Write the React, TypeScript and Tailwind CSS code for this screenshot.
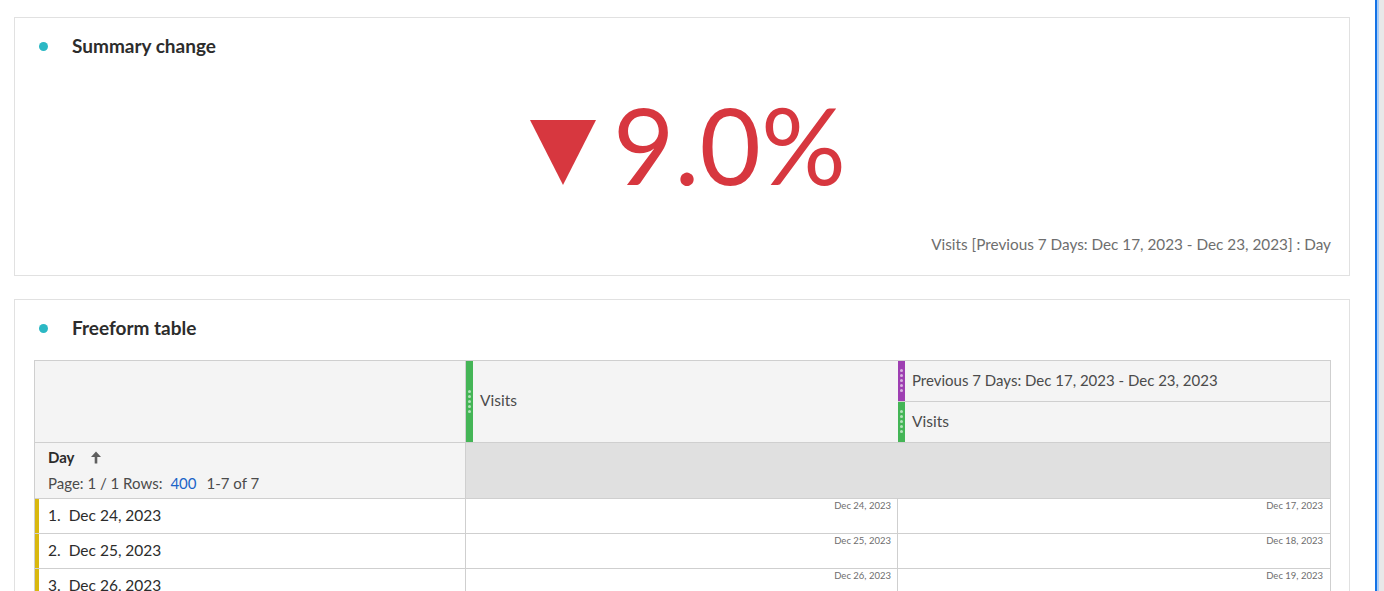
import React from "react";

const font = { fontFamily: "Lato, 'Noto Sans', sans-serif" };

function Grip({ color }: { color: string }) {
  return (
    <div className={`flex w-[7px] shrink-0 flex-col items-center justify-center gap-[2px] self-stretch ${color}`}>
      {[0, 1, 2, 3, 4].map((i) => (
        <span key={i} className="h-[3px] w-[3px] rounded-full bg-white/60" />
      ))}
    </div>
  );
}

function PanelTitle({ label }: { label: string }) {
  return (
    <div className="flex items-center pl-[24px] pt-[14px]">
      <span className="h-[9px] w-[9px] rounded-full bg-[#2bb8c4]" />
      <span className="ml-[24px] text-[19px] font-bold text-[#2c2c2c]">{label}</span>
    </div>
  );
}

const rows = [
  { n: 1, day: "Dec 24, 2023", a: "Dec 24, 2023", b: "Dec 17, 2023" },
  { n: 2, day: "Dec 25, 2023", a: "Dec 25, 2023", b: "Dec 18, 2023" },
  { n: 3, day: "Dec 26, 2023", a: "Dec 26, 2023", b: "Dec 19, 2023" },
];

export default function App() {
  return (
    <div className="flex h-[591px] w-[1384px] overflow-hidden bg-white" style={font}>
      <div className="flex flex-1 flex-col gap-[23px] pl-[14px] pr-[25px] pt-[17px]">
        {/* Summary change */}
        <section className="flex h-[259px] shrink-0 flex-col border border-[#e1e1e1] bg-white">
          <PanelTitle label="Summary change" />
          <div className="flex flex-1 items-center justify-center pl-[12px] pt-[8px]">
            <svg width="66" height="66" viewBox="0 0 66 66" className="mt-[4px]">
              <polygon points="0,0 66,0 33,65" fill="#d7373f" />
            </svg>
            <span className="mb-[14px] ml-[17px] text-[106px] leading-none text-[#d7373f]">9.0%</span>
          </div>
          <div className="pb-[19px] pr-[18px] text-right text-[15.3px] text-[#6e6e6e]">
            Visits [Previous 7 Days: Dec 17, 2023 - Dec 23, 2023] : Day
          </div>
        </section>

        {/* Freeform table */}
        <section className="flex flex-1 flex-col border border-b-0 border-[#e1e1e1] bg-white">
          <PanelTitle label="Freeform table" />
          <div className="ml-[19px] mr-[18px] mt-[17px] border border-b-0 border-[#cfcfcf] text-[#2c2c2c]">
            {/* header row */}
            <div className="grid h-[82px] grid-cols-[431px_432px_1fr] border-b border-[#cfcfcf] bg-[#f4f4f4]">
              <div className="border-r border-[#cfcfcf]" />
              <div className="flex items-center">
                <Grip color="bg-[#44b556]" />
                <span className="ml-[7px] text-[15.5px] text-[#4b4b4b]">Visits</span>
              </div>
              <div className="flex flex-col">
                <div className="flex flex-1 items-center border-b border-[#cfcfcf]">
                  <Grip color="bg-[#9e3fb2]" />
                  <span className="ml-[7px] text-[15px] text-[#4b4b4b]">
                    Previous 7 Days: Dec 17, 2023 - Dec 23, 2023
                  </span>
                </div>
                <div className="flex flex-1 items-center">
                  <Grip color="bg-[#44b556]" />
                  <span className="ml-[7px] text-[15.5px] text-[#4b4b4b]">Visits</span>
                </div>
              </div>
            </div>
            {/* dimension row */}
            <div className="grid h-[56px] grid-cols-[431px_1fr] border-b border-[#cfcfcf]">
              <div className="flex flex-col justify-center gap-[3px] border-r border-[#cfcfcf] bg-[#f4f4f4] pl-[13px]">
                <div className="flex items-center text-[15px] font-bold">
                  Day
                  <svg width="12" height="13" viewBox="0 0 12 13" className="ml-[15px]">
                    <path d="M6 0.5 L11 6 H7.3 V12.5 H4.7 V6 H1 Z" fill="#5e5e5e" />
                  </svg>
                </div>
                <div className="flex items-center text-[15px] text-[#4b4b4b]">
                  Page: 1 / 1 Rows:
                  <span className="ml-[8px] text-[#1a64c8]">400</span>
                  <span className="ml-[10px]">1-7 of 7</span>
                </div>
              </div>
              <div className="bg-[#e0e0e0]" />
            </div>
            {/* data rows */}
            {rows.map((r) => (
              <div key={r.n} className="grid h-[35px] grid-cols-[431px_432px_1fr] border-b border-[#cfcfcf]">
                <div className="flex border-r border-[#cfcfcf]">
                  <div className="w-[4px] bg-[#d9b80f]" />
                  <div className="flex items-center pl-[9px] text-[15.5px] text-[#2c2c2c]">
                    <span className="mr-[8px]">{r.n}.</span>
                    {r.day}
                  </div>
                </div>
                <div className="border-r border-[#cfcfcf] pr-[6px] pt-[1px] text-right text-[9.5px] leading-[11px] text-[#6e6e6e]">
                  {r.a}
                </div>
                <div className="pr-[7px] pt-[1px] text-right text-[9.5px] leading-[11px] text-[#6e6e6e]">{r.b}</div>
              </div>
            ))}
          </div>
        </section>
      </div>
      {/* right edge rail */}
      <div className="flex w-[9px] shrink-0">
        <div className="w-[2px] bg-[#1473e6]" />
        <div className="w-[2px] bg-[#a9cdf6]" />
        <div className="flex-1 bg-[#e8e8e8]" />
      </div>
    </div>
  );
}
